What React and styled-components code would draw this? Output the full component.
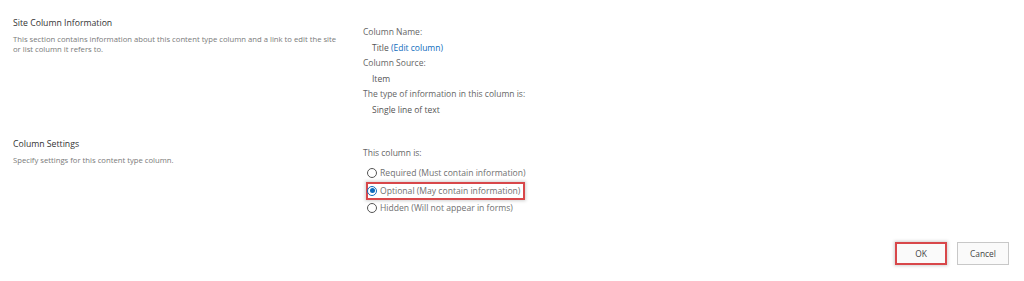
import styled, { createGlobalStyle } from 'styled-components';

const GlobalStyle = createGlobalStyle`
  html, body {
    margin: 0;
    padding: 0;
    background: #ffffff;
  }
  body {
    font-family: "Open Sans", "Noto Sans", sans-serif;
    -webkit-font-smoothing: antialiased;
  }
`;

const Page = styled.div`
  width: 1024px;
  height: 281px;
  box-sizing: border-box;
  padding: 15px 15px 0 13px;
  overflow: hidden;
`;

const Section = styled.section`
  display: grid;
  grid-template-columns: 350px 1fr;
  min-height: ${props => props.$height}px;
`;

const SectionInfo = styled.div`
  display: flex;
  flex-direction: column;
  padding-top: ${props => props.$offset || 0}px;
`;

const SectionTitle = styled.h2`
  margin: 0 0 4px;
  font-size: 8.7px;
  line-height: 14px;
  font-weight: 400;
  color: #333333;
`;

const SectionDesc = styled.p`
  margin: 0;
  width: 332px;
  font-size: 7.7px;
  line-height: 10px;
  color: #7a7a7a;
`;

const Fields = styled.div`
  display: flex;
  flex-direction: column;
  padding-top: ${props => props.$offset || 0}px;
`;

const FieldLabel = styled.div`
  font-size: 8.5px;
  line-height: 15.5px;
  color: #666666;
`;

const FieldValue = styled.div`
  padding-left: 9px;
  font-size: 8.5px;
  line-height: 15.5px;
  color: #555555;
`;

const EditLink = styled.a`
  color: #0f6cbd;
  text-decoration: none;
`;

const RadioList = styled.div`
  display: flex;
  flex-direction: column;
  margin-top: 4px;
`;

const RadioRow = styled.label`
  display: flex;
  align-items: center;
  gap: 3px;
  width: fit-content;
  height: 17.5px;
  margin-left: 3px;
  padding: 0 5px 0 1px;
  box-sizing: border-box;
  font-size: 8.6px;
  color: #707070;
  box-shadow: ${props =>
    props.$highlight
      ? 'inset 0 0 0 2px #d8474a, 0 0 3px 1px rgba(0, 0, 0, 0.18)'
      : 'none'};
`;

const RadioCircle = styled.span`
  width: 10px;
  height: 10px;
  box-sizing: border-box;
  border-radius: 50%;
  border: 1px solid ${props => (props.$checked ? '#0f6cbd' : '#555555')};
  display: flex;
  align-items: center;
  justify-content: center;
  flex-shrink: 0;

  &::after {
    content: '';
    width: 5px;
    height: 5px;
    border-radius: 50%;
    background: ${props => (props.$checked ? '#0f6cbd' : 'transparent')};
  }
`;

const Footer = styled.div`
  display: flex;
  justify-content: flex-end;
  gap: 10px;
`;

const Button = styled.button`
  width: 52px;
  height: 23px;
  box-sizing: border-box;
  padding: 0;
  font-family: inherit;
  font-size: 8.4px;
  color: #444444;
  background: #fafafa;
  border: ${props => (props.$highlight ? '2px solid #d8474a' : '1px solid #c8c8c8')};
  box-shadow: ${props =>
    props.$highlight ? '0 0 3px 1px rgba(0, 0, 0, 0.18)' : 'none'};
  cursor: pointer;
`;

const radios = [
  { label: 'Required (Must contain information)', checked: false },
  { label: 'Optional (May contain information)', checked: true },
  { label: 'Hidden (Will not appear in forms)', checked: false },
];

export default function App() {
  return (
    <>
      <GlobalStyle />
      <Page>
        <Section $height={122}>
          <SectionInfo $offset={1}>
            <SectionTitle>Site Column Information</SectionTitle>
            <SectionDesc>
              This section contains information about this content type column and a link to edit the site or list column it refers to.
            </SectionDesc>
          </SectionInfo>
          <Fields $offset={9}>
            <FieldLabel>Column Name:</FieldLabel>
            <FieldValue>
              Title <EditLink href="#">(Edit column)</EditLink>
            </FieldValue>
            <FieldLabel>Column Source:</FieldLabel>
            <FieldValue>Item</FieldValue>
            <FieldLabel>The type of information in this column is:</FieldLabel>
            <FieldValue>Single line of text</FieldValue>
          </Fields>
        </Section>

        <Section $height={105}>
          <SectionInfo>
            <SectionTitle>Column Settings</SectionTitle>
            <SectionDesc>Specify settings for this content type column.</SectionDesc>
          </SectionInfo>
          <Fields $offset={8}>
            <FieldLabel>This column is:</FieldLabel>
            <RadioList>
              {radios.map(r => (
                <RadioRow key={r.label} $highlight={r.checked}>
                  <RadioCircle $checked={r.checked} />
                  {r.label}
                </RadioRow>
              ))}
            </RadioList>
          </Fields>
        </Section>

        <Footer>
          <Button $highlight>OK</Button>
          <Button>Cancel</Button>
        </Footer>
      </Page>
    </>
  );
}
